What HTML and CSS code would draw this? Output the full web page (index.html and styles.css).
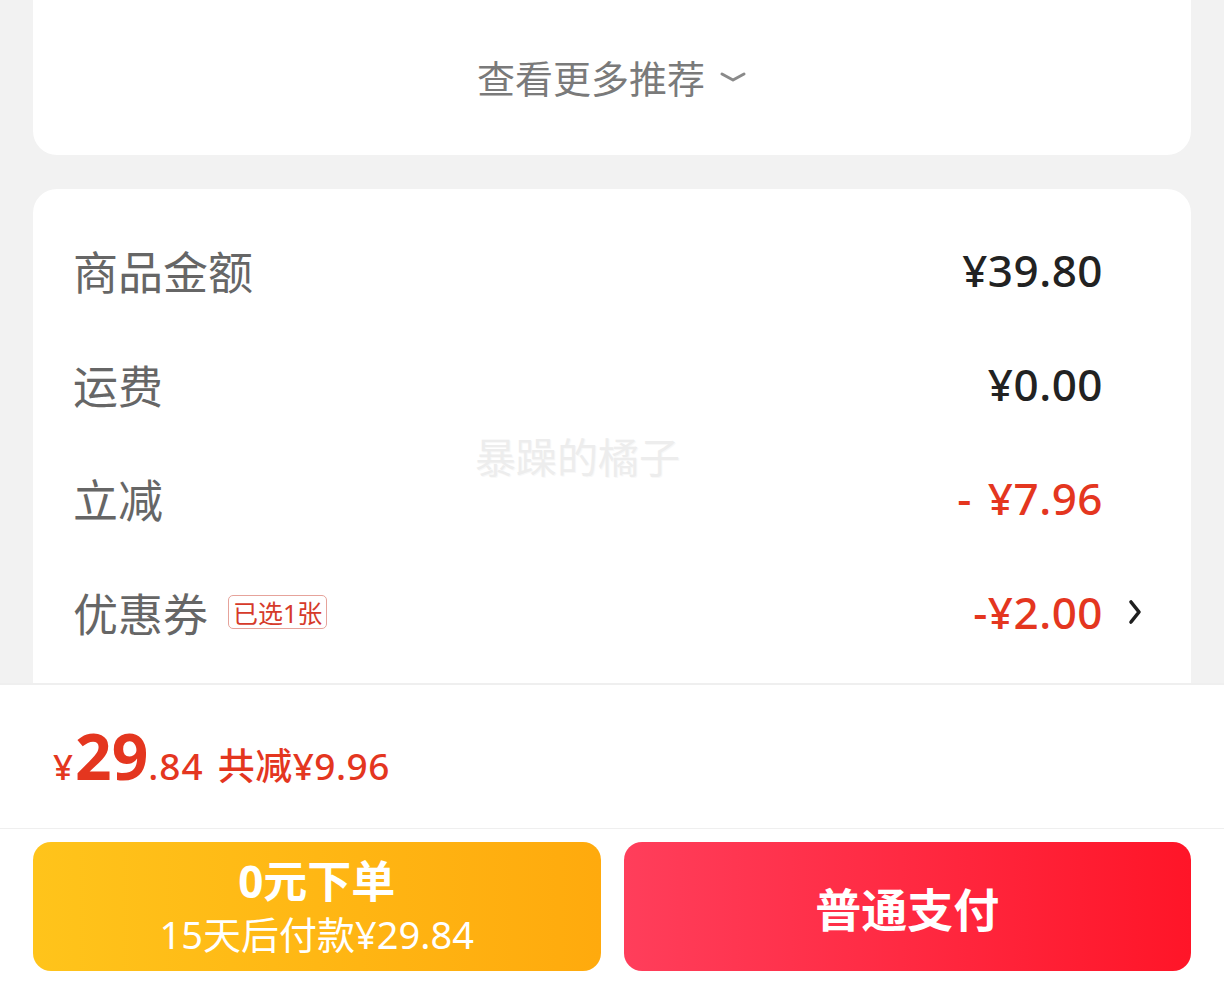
FILE: index.html
```html
<!DOCTYPE html>
<html lang="zh-CN">
<head>
    <meta charset="UTF-8">
    <meta name="viewport" content="width=device-width, initial-scale=1.0">
    <title>确认订单</title>
    <link rel="stylesheet" href="styles.css">
</head>
<body>
    <div class="page">
        <div class="scroll-area">
            <div class="card more-card">
                <div class="more-link">
                    <span>查看更多推荐</span>
                    <svg class="chevron-down" width="28" height="14" viewBox="0 0 28 14">
                        <polyline points="3,4 14,10 25,4" fill="none" stroke="#8a8a8a" stroke-width="3" stroke-linecap="round" stroke-linejoin="round"/>
                    </svg>
                </div>
            </div>

            <div class="card summary-card">
                <div class="row">
                    <span class="label">商品金额</span>
                    <span class="value">¥39.80</span>
                </div>
                <div class="row">
                    <span class="label">运费</span>
                    <span class="value">¥0.00</span>
                </div>
                <div class="row">
                    <span class="label">立减</span>
                    <span class="value red"><span class="minus">-</span>¥7.96</span>
                </div>
                <div class="row">
                    <span class="label">优惠券 <span class="tag">已选1张</span></span>
                    <span class="value red">-¥2.00</span>
                    <svg class="chevron-right" width="16" height="30" viewBox="0 0 16 30">
                        <polyline points="4,5 12,15 4,25" fill="none" stroke="#1f1f1f" stroke-width="3.6" stroke-linecap="round" stroke-linejoin="round"/>
                    </svg>
                </div>
                <div class="watermark">暴躁的橘子</div>
            </div>
        </div>

        <div class="bottom-bar">
            <div class="total">
                <span class="yen">¥</span><span class="int">29</span><span class="dec">.84</span>
                <span class="saved">共减¥9.96</span>
            </div>
            <div class="actions">
                <button class="btn btn-later">
                    <span class="btn-title">0元下单</span>
                    <span class="btn-sub">15天后付款¥29.84</span>
                </button>
                <button class="btn btn-pay">
                    <span class="btn-main">普通支付</span>
                </button>
            </div>
        </div>
    </div>
</body>
</html>
```

FILE: styles.css
```css
* {
    margin: 0;
    padding: 0;
    box-sizing: border-box;
}

body {
    font-family: "Noto Sans", "Noto Sans CJK SC", sans-serif;
    background: #f2f2f2;
    color: #222;
}

.page {
    height: 1008px;
    display: flex;
    flex-direction: column;
    overflow: hidden;
}

.scroll-area {
    flex: 1;
    overflow: hidden;
    padding: 0 33px;
    display: flex;
    flex-direction: column;
    gap: 34px;
}

.card {
    background: #fff;
    border-radius: 24px;
}

.more-card {
    height: 155px;
    border-radius: 0 0 24px 24px;
    display: flex;
    justify-content: center;
    padding-top: 50px;
}

.more-link {
    display: flex;
    align-items: center;
    height: 52px;
    font-size: 38px;
    color: #7a7a7a;
}

.chevron-down {
    margin-left: 14px;
    margin-top: 2px;
}

.summary-card {
    flex: 1;
    position: relative;
    border-radius: 24px 24px 0 0;
    padding: 24px 88px 0 40px;
}

.row {
    display: flex;
    align-items: center;
    height: 114px;
}

.label {
    flex: 1;
    display: flex;
    align-items: center;
    font-size: 45px;
    color: #666;
}

.tag {
    margin-left: 20px;
    height: 34px;
    padding: 0 4px;
    display: inline-flex;
    align-items: center;
    font-size: 25px;
    color: #d63a2a;
    border: 1px solid #e6a39b;
    border-radius: 5px;
}

.value {
    font-size: 44px;
    font-weight: 500;
    color: #222;
    letter-spacing: 0.5px;
}

.value.red {
    color: #e4361f;
}

.minus {
    margin-right: 16px;
}

.chevron-right {
    margin-left: 24px;
    margin-right: -40px;
}

.watermark {
    position: absolute;
    left: 442px;
    top: 236px;
    font-size: 41px;
    color: #ededed;
    text-shadow: 1px 1px 0 #f8f8f8;
}

.bottom-bar {
    background: #fff;
    border-top: 2px solid #efefef;
    height: 325px;
    flex-shrink: 0;
}

.total {
    height: 144px;
    display: flex;
    align-items: baseline;
    padding: 27px 0 0 53px;
    color: #e4361f;
    border-bottom: 1px solid #efefef;
}

.yen {
    font-size: 35px;
    font-weight: 500;
}

.int {
    font-size: 64px;
    font-weight: 700;
    margin-left: 2px;
}

.dec {
    font-size: 37px;
    font-weight: 500;
    letter-spacing: 1px;
}

.saved {
    font-size: 37px;
    font-weight: 500;
    margin-left: 14px;
    letter-spacing: 0.5px;
}

.actions {
    display: flex;
    gap: 23px;
    padding: 13px 33px 0;
}

.btn {
    flex: 1;
    height: 129px;
    border: none;
    border-radius: 18px;
    color: #fff;
    font-family: inherit;
    display: flex;
    flex-direction: column;
    align-items: center;
    justify-content: center;
}

.btn-later {
    background: linear-gradient(90deg, #ffc41b 0%, #ffaa0d 100%);
}

.btn-pay {
    background: linear-gradient(90deg, #ff3e5b 0%, #ff1528 100%);
}

.btn-title {
    font-size: 44px;
    font-weight: 700;
    line-height: 54px;
}

.btn-sub {
    font-size: 38px;
    line-height: 52px;
}

.btn-main {
    font-size: 46px;
    font-weight: 700;
}
```
